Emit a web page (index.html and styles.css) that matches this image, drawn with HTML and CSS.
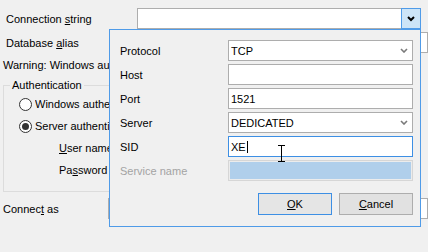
FILE: index.html
```html
<!DOCTYPE html>
<html lang="en">
<head>
    <meta charset="UTF-8">
    <title>Connection properties</title>
    <link rel="stylesheet" href="styles.css">
</head>
<body>

<div class="window">
    <!-- main dialog underneath the drop-down -->
    <div class="dialog">
        <div class="row">
            <label class="lbl-top">Connection <u>s</u>tring</label>
            <div class="combo">
                <div class="combo-text"></div>
                <div class="combo-btn">
                    <svg width="8" height="6" viewBox="0 0 8 6"><polyline points="1,1 4,4 7,1" fill="none" stroke="#000" stroke-width="2"/></svg>
                </div>
            </div>
        </div>
        <div class="row">
            <label class="lbl-top">Database <u>a</u>lias</label>
            <div class="edit"></div>
        </div>
        <div class="warning clip">Warning: Windows authentication is not supported by this server</div>

        <fieldset class="group">
            <legend>Authentication</legend>
            <div class="opt">
                <span class="radio"></span>
                <span class="clip opt-text">Windows authentication</span>
            </div>
            <div class="opt">
                <span class="radio checked"></span>
                <span class="clip opt-text">Server authentication</span>
            </div>
            <div class="cred">
                <span class="clip cred-text"><u>U</u>ser name</span>
            </div>
            <div class="cred pw">
                <span class="clip cred-text">Pa<u>s</u>sword</span>
            </div>
        </fieldset>

        <div class="row connect">
            <label class="lbl-conn">Connec<u>t</u> as</label>
            <div class="edit"></div>
        </div>
    </div>

    <!-- connection string editor drop-down -->
    <div class="popup">
        <div class="grid">
            <span class="plabel">Protocol</span>
            <div class="field select">
                <span>TCP</span>
                <svg width="8" height="5" viewBox="0 0 8 5"><polyline points="1,1 4,4 7,1" fill="none" stroke="#7a7a7a" stroke-width="1.6"/></svg>
            </div>

            <span class="plabel">Host</span>
            <div class="field"></div>

            <span class="plabel">Port</span>
            <div class="field"><span>1521</span></div>

            <span class="plabel">Server</span>
            <div class="field select">
                <span>DEDICATED</span>
                <svg width="8" height="5" viewBox="0 0 8 5"><polyline points="1,1 4,4 7,1" fill="none" stroke="#7a7a7a" stroke-width="1.6"/></svg>
            </div>

            <span class="plabel">SID</span>
            <div class="field focused"><span>XE</span><span class="caret"></span></div>

            <span class="plabel disabled">Service name</span>
            <div class="field off"></div>
        </div>

        <div class="buttons">
            <button class="btn default"><u>O</u>K</button>
            <button class="btn"><u>C</u>ancel</button>
        </div>
    </div>

    <svg class="ibeam" width="9" height="17" viewBox="0 0 9 17">
        <path d="M1 0.5h7M4.5 0.5v16M1 16.5h7" fill="none" stroke="#000" stroke-width="1"/>
    </svg>
</div>

</body>
</html>
```

FILE: styles.css
```css
body {
    margin: 0;
    background: #f0f0f0;
    font-family: 'Liberation Sans', Arial, sans-serif;
    font-size: 11px;
    color: #000;
}

u {
    text-decoration-thickness: 1px;
    text-underline-offset: 1px;
}

.window {
    position: relative;
    width: 428px;
    height: 252px;
    overflow: hidden;
}

.dialog {
    padding-top: 8px;
}

/* texts that run under the drop-down are cut at its left edge */
.clip {
    display: block;
    overflow: hidden;
    white-space: nowrap;
}

.row {
    display: flex;
    align-items: center;
    height: 21px;
}

.row + .row {
    margin-top: 3px;
}

.lbl-top {
    width: 131px;
    padding-left: 6px;
}

.combo {
    display: flex;
    width: 284px;
    height: 21px;
    box-sizing: border-box;
    border: 1px solid #adadad;
    background: #fff;
}

.combo-text {
    flex: 1;
}

.combo-btn {
    width: 18px;
    margin: -1px -1px -1px 0;
    border: 1px solid #4f9be8;
    background: #cce4f7;
    display: flex;
    align-items: center;
    justify-content: center;
}

.edit {
    flex: 1;
    height: 21px;
    box-sizing: border-box;
    border: 1px solid #adadad;
    background: #fff;
}

.warning {
    width: 106px;
    margin-top: 5px;
    padding-left: 3px;
    line-height: 14px;
}

/* Authentication group box */
.group {
    margin: 6px 8px 0 3px;
    padding: 0 0 6px 0;
    border: 1px solid #dcdcdc;
    height: 106px;
}

.group legend {
    margin-left: 6px;
    padding: 0 2px;
    line-height: 14px;
}

.opt {
    display: flex;
    align-items: center;
    height: 22px;
    padding-left: 15px;
}

.opt:first-of-type {
    margin-top: 1px;
}

.opt-text {
    width: 74px;
}

.radio {
    flex: none;
    width: 13px;
    height: 13px;
    box-sizing: border-box;
    border: 1px solid #333;
    border-radius: 50%;
    background: #fff;
    margin-right: 3px;
    display: flex;
    align-items: center;
    justify-content: center;
}

.radio.checked::after {
    content: '';
    width: 7px;
    height: 7px;
    border-radius: 50%;
    background: #333;
}

.cred {
    display: flex;
    align-items: center;
    height: 21px;
    padding-left: 55px;
}

.cred-text {
    width: 50px;
}

.cred.pw {
    height: 23px;
}

.connect {
    margin-top: 6px;
}

.lbl-conn {
    width: 105px;
    padding-left: 3px;
}

/* drop-down editor */
.popup {
    position: absolute;
    left: 109px;
    top: 29px;
    width: 312px;
    height: 198px;
    box-sizing: border-box;
    border: 1px solid #4f9be8;
    background: #f0f0f0;
    padding: 10px 7px 0 10px;
}

.grid {
    display: grid;
    grid-template-columns: 108px 1fr;
    grid-auto-rows: 21px;
    row-gap: 3px;
    align-items: center;
}

.plabel.disabled {
    color: #a3a3a3;
}

.field {
    height: 21px;
    box-sizing: border-box;
    border: 1px solid #adadad;
    background: #fff;
    display: flex;
    align-items: center;
    padding: 0 4px 0 2px;
}

.field.select {
    justify-content: space-between;
}

.field.focused {
    border-color: #3d8fe4;
}

.caret {
    width: 1px;
    height: 12px;
    background: #000;
    margin-left: 1px;
}

.field.off {
    border-color: #d6d6d6;
    background: #b0cfeb;
    box-shadow: inset 0 0 0 1px #ececec;
}

.buttons {
    display: flex;
    justify-content: flex-end;
    gap: 7px;
    margin-top: 12px;
}

.btn {
    width: 74px;
    height: 22px;
    box-sizing: border-box;
    border: 1px solid #adadad;
    background: #e1e1e1;
    font-family: inherit;
    font-size: 11px;
    color: #000;
    padding: 0;
}

.btn.default {
    border-color: #3d8fe4;
    background: #e5e5e5;
}

.ibeam {
    position: absolute;
    left: 277px;
    top: 145px;
}
```
